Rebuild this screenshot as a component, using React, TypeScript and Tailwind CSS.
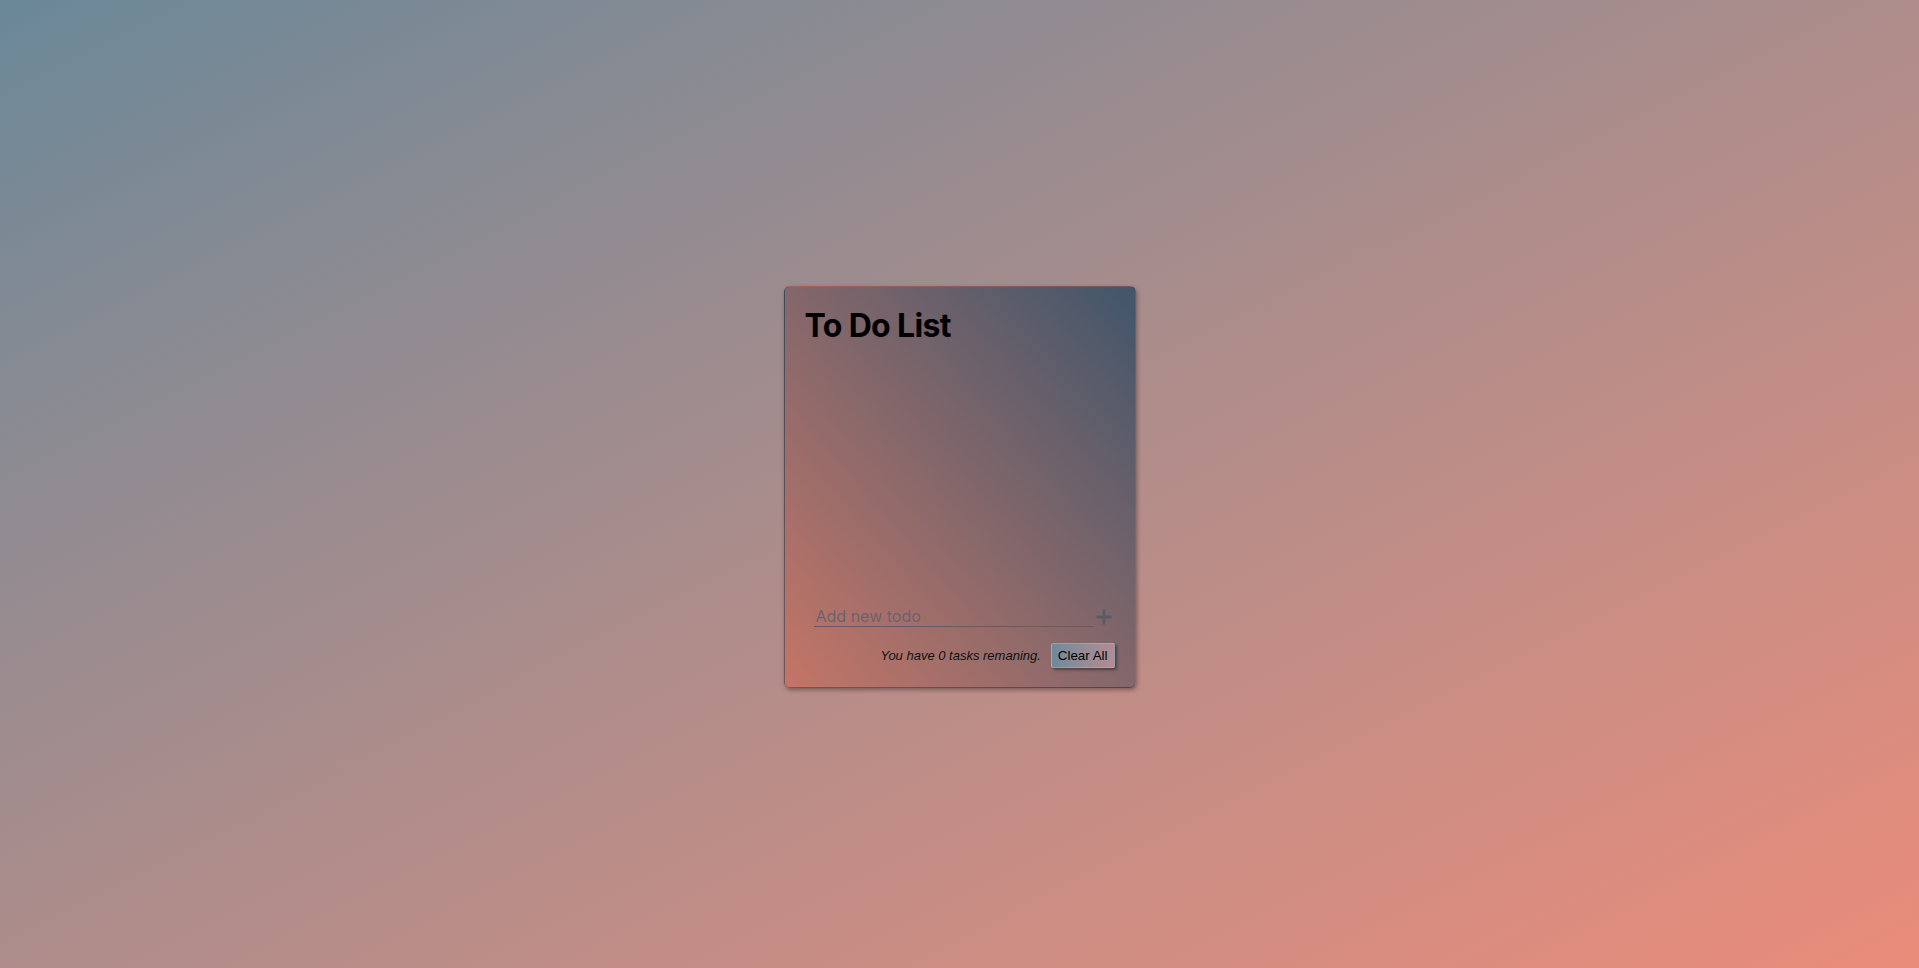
import React from "react";

export default function App() {
  return (
    <div
      className="w-full h-[968px] flex items-center justify-center bg-linear-to-br from-[#6a8898] to-[#ea8c7a]"
      style={{ fontFamily: "Inter, 'Liberation Sans', sans-serif" }}
    >
      <div className="w-[352px] h-[402px] mt-[6px] rounded-[6px] border border-[rgba(40,30,40,0.2)] shadow-[1px_2px_4px_rgba(0,0,0,0.35)] bg-linear-to-bl from-[#41556a] to-[#c47566] flex flex-col pt-[19px] pb-[19px] pl-[20px] pr-[20px]">
        <h1 className="text-[32px] font-bold text-black tracking-[-0.02em] leading-[39px] m-0">
          To Do List
        </h1>
        <div className="flex-1" />
        <div className="flex items-end ml-[9px] mr-[2px]">
          <input
            type="text"
            placeholder="Add new todo"
            className="flex-1 h-[21px] bg-transparent border-0 border-b border-[#6b5862] outline-none text-[16px] leading-[19px] text-black placeholder:text-[#6a636f] px-[2px]"
            style={{ fontFamily: "Inter, sans-serif" }}
          />
          <button className="ml-[1px] mb-[1px] w-[18px] h-[18px] flex items-center justify-center">
            <svg width="18" height="18" viewBox="0 0 18 18">
              <path d="M9 1.5V16.5M1.5 9H16.5" stroke="#5e5a65" strokeWidth="3" strokeLinecap="butt" />
            </svg>
          </button>
        </div>
        <div className="flex items-center justify-end mt-[16px]">
          <span
            className="italic text-[13px] text-[#111] mr-[10px]"
            style={{ fontFamily: "'Liberation Sans', Arial, sans-serif" }}
          >
            You have 0 tasks remaning.
          </span>
          <button
            className="h-[25px] px-[6px] rounded-[2px] border border-[rgba(200,200,210,0.35)] bg-linear-to-r from-[#6d8a9b] to-[#b58b91] text-[13.33px] text-black shadow-[2px_2px_3px_rgba(0,0,0,0.4)]"
            style={{ fontFamily: "'Liberation Sans', Arial, sans-serif" }}
          >
            Clear All
          </button>
        </div>
      </div>
    </div>
  );
}
